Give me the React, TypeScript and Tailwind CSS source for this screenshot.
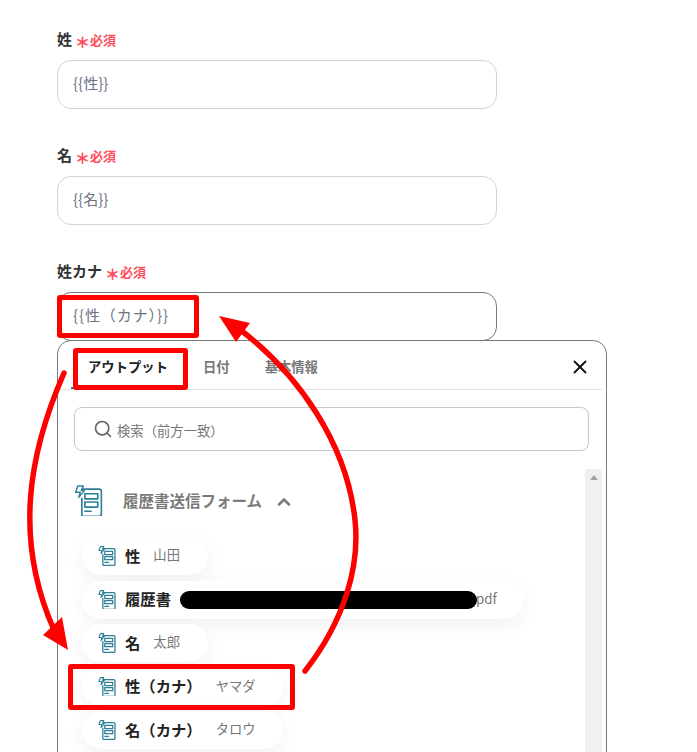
import React from 'react';
import { ChevronUp, Search, X } from 'lucide-react';

const FormIcon = ({ size, stroke = 1.6 }: { size: number; stroke?: number }) => (
    <svg width={size} height={size * 1.1} viewBox="0 0 28 31" fill="none" stroke="#2f7f96" strokeWidth={stroke} strokeLinejoin="round" strokeLinecap="round">
        <path d="M8 4h16.5a2 2 0 0 1 2 2v22.5a2 2 0 0 1-2 2H9.5a2 2 0 0 1-2-2V13" />
        <path d="M3.5 1h5.5L7 5.5h3L4.5 12l1.5-5H1.5z" strokeWidth={stroke * 0.85} />
        <rect x="10.5" y="8.5" width="12.5" height="5" />
        <rect x="10.5" y="16.5" width="12.5" height="5" />
        <path d="M10.5 25.5h6" />
    </svg>
);

const Field = ({ label, value, active }: { label: string; value: string; active?: boolean }) => (
    <div>
        <div className="flex items-center h-5 gap-[3px] -translate-y-px">
            <span className="text-[15px] font-bold text-[#333333]">{label}</span>
            <span className="text-[15px] font-black text-[#ff4d5e] leading-none mt-[4px]">＊</span>
            <span className="text-[13px] font-bold text-[#ff4d5e] -ml-[3px] mt-[1px]">必須</span>
        </div>
        <div className={`mt-[10px] w-[440px] h-[49px] rounded-[14px] border flex items-center px-[15px] text-[15px] text-[#6b7280] ${active ? 'border-[#7a7a7a] tracking-[0.9px]' : 'border-[#d1d5db]'}`}>
            <span className="-translate-y-px">{value}</span>
        </div>
    </div>
);

const Pill = ({ name, value, gap, width }: { name: string; value: string; gap: string; width: string }) => (
    <div className={`flex items-center h-[38px] mb-[5.5px] pl-[16px] rounded-full bg-white shadow-[0_6px_20px_rgba(0,0,0,0.06)] ${width}`}>
        <FormIcon size={18} stroke={2} />
        <span className="ml-[9px] text-[15.33px] font-bold text-[#222222] whitespace-nowrap -translate-y-px">{name}</span>
        <span className={`text-[13.33px] text-[#777777] whitespace-nowrap -translate-y-px ${gap}`}>{value}</span>
    </div>
);

export default function App() {
    return (
        <div className="relative w-[697px] h-[752px] overflow-hidden bg-white font-['Noto_Sans_CJK_JP',sans-serif]">
            <div className="pl-[57px] pt-[30px]">
                <div className="flex flex-col gap-[37px]">
                    <Field label="姓" value="{{性}}" />
                    <Field label="名" value="{{名}}" />
                    <Field label="姓カナ" value="{{性（カナ）}}" active />
                </div>

                {/* Output picker */}
                <div className="-mt-px w-[550px] h-[500px] border border-[#7a7a7a] rounded-t-[14px] bg-white">
                    <div className="relative flex items-center h-[49px] pt-[3px] mr-[4px] border-b border-[#e2e2e2] text-[13.33px] font-bold text-[#777777]">
                        <span className="ml-[30px] text-[#222222]">アウトプット</span>
                        <span className="ml-[35px]">日付</span>
                        <span className="ml-[35px]">基本情報</span>
                        <X className="absolute right-[11px] top-[15px] w-[22px] h-[22px] text-[#111111]" strokeWidth={2} />
                        <span className="absolute left-[13px] bottom-0 w-[100px] h-[2px] bg-[#2f7f96]" />
                    </div>
                    <div className="mt-[17px] mx-[16px] h-[44px] w-[515px] rounded-[8px] border border-[#c8c8c8] flex items-center pl-[18px] text-[13.33px] text-[#777777]">
                        <Search className="w-[20px] h-[20px] text-[#666666]" strokeWidth={2} />
                        <span className="ml-[4px] mt-[3px]">検索（前方一致）</span>
                    </div>
                    <div className="mt-[18px] flex">
                        <div className="flex-1">
                            <div className="flex items-center ml-[16px] mt-[15px] h-[33px]">
                                <FormIcon size={29} />
                                <span className="ml-[20px] mt-[1px] text-[15.5px] font-bold text-[#7a7a7a]">履歴書送信フォーム</span>
                                <ChevronUp className="ml-[12px] mt-[2px] w-[20px] h-[20px] text-[#7a7a7a]" strokeWidth={3} />
                            </div>
                            <div className="mt-[20px] ml-[24px]">
                                <Pill name="性" value="山田" gap="ml-[13px]" width="w-[126px]" />
                                <div className="flex items-center h-[38px] mb-[5.5px] pl-[16px] w-[442px] rounded-full bg-white shadow-[0_6px_20px_rgba(0,0,0,0.06)]">
                                    <FormIcon size={18} stroke={2} />
                                    <span className="ml-[9px] text-[15.33px] font-bold text-[#222222] -translate-y-px">履歴書</span>
                                    <span className="ml-[9px] w-[297px] h-[18px] rounded-full bg-black" />
                                    <span className="-ml-[1px] text-[13.33px] text-[#777777] -translate-y-px">pdf</span>
                                </div>
                                <Pill name="名" value="太郎" gap="ml-[13px]" width="w-[126px]" />
                                <Pill name="性（カナ）" value="ヤマダ" gap="ml-[14px]" width="w-[201px]" />
                                <Pill name="名（カナ）" value="タロウ" gap="ml-[14px]" width="w-[201px]" />
                            </div>
                        </div>
                        <div className="w-[17px] mr-[4px] h-[400px] bg-[#f0f0f0] flex justify-center pt-[6px]">
                            <div className="w-0 h-0 border-x-[4px] border-x-transparent border-b-[5px] border-b-[#a3a3a3]" />
                        </div>
                    </div>
                </div>
            </div>

            {/* Red annotations over the page */}
            <div className="absolute left-[57px] top-[295px] w-[142px] h-[43px] border-[5px] border-[#ff0000] rounded-[3px]" />
            <div className="absolute left-[73px] top-[348px] w-[115px] h-[42px] border-[5px] border-[#ff0000] rounded-[3px]" />
            <div className="absolute left-[68px] top-[664px] w-[227px] h-[46px] border-[5px] border-[#ff0000] rounded-[3px]" />
            <svg className="absolute left-0 top-0 pointer-events-none" width="697" height="752" fill="none">
                <path d="M64 373C28 455 14 540 54 630" stroke="#ff0000" strokeWidth="5.5" strokeLinecap="round" />
                <path d="M68 650L43 635L62 617Z" fill="#ff0000" />
                <path d="M305 671C345 620 360 565 355 520C347 445 300 375 238 328" stroke="#ff0000" strokeWidth="5.5" strokeLinecap="round" />
                <path d="M219 316L250 323L236 342Z" fill="#ff0000" />
            </svg>
        </div>
    );
}
